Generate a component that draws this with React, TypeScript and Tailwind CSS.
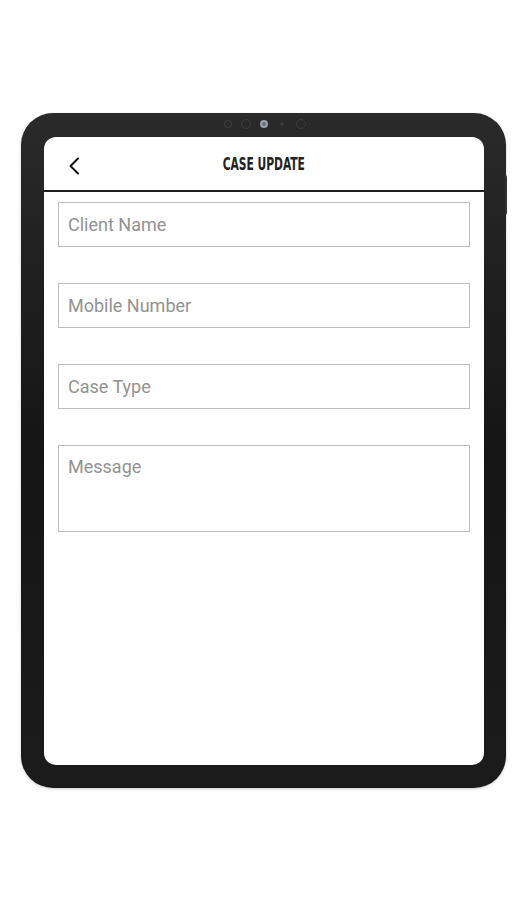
import React, { useState } from "react";

type Field = {
  name: string;
  placeholder: string;
};

const fields: Field[] = [
  { name: "client_name", placeholder: "Client Name" },
  { name: "mobile", placeholder: "Mobile Number" },
  { name: "case_type", placeholder: "Case Type" },
];

const App: React.FC = () => {
  const [form, setForm] = useState<Record<string, string>>({});

  const handleChange = (
    e: React.ChangeEvent<HTMLInputElement | HTMLTextAreaElement>
  ) => {
    const { name, value } = e.target;
    setForm((prev) => ({ ...prev, [name]: value }));
  };

  return (
    <div className="min-h-[900px] w-[527px] bg-white pt-[113px] pl-[21px]">
      {/* TABLET FRAME */}
      <div className="relative w-[485px] h-[675px] rounded-[32px] bg-gradient-to-b from-[#2a2a2a] via-[#151515] to-[#1b1b1b] pt-[24px] pl-[23px] pr-[22px] pb-[23px] shadow-[0_1px_3px_rgba(0,0,0,0.2)]">
        {/* side button */}
        <div className="absolute right-[-1px] top-[62px] w-[2px] h-[40px] rounded-r bg-[#333]" />

        {/* camera row */}
        <div className="absolute top-[5px] left-0 right-0 flex justify-center items-center gap-[9px] h-[12px] pl-[3px]">
          <span className="w-[8px] h-[8px] rounded-full border border-[#3d3d3d]" />
          <span className="w-[10px] h-[10px] rounded-full border border-[#3d3d3d]" />
          <span className="w-[8px] h-[8px] rounded-full bg-[#6b6f7c] border-2 border-[#9aa0ad]" />
          <span className="w-[4px] h-[4px] rounded-full bg-[#3a3a3a] mx-[3px]" />
          <span className="w-[10px] h-[10px] rounded-full border border-[#3d3d3d]" />
        </div>

        {/* SCREEN */}
        <div className="w-full h-full rounded-[12px] bg-white overflow-hidden flex flex-col">
          {/* HEADER */}
          <div className="relative h-[55px] flex items-center justify-center border-b-2 border-[#1f1f1f]">
            <svg
              className="absolute left-[24px] top-[20px]"
              width="12"
              height="18"
              viewBox="0 0 12 18"
              fill="none"
            >
              <path
                d="M10 1.5 L2.5 9 L10 16.5"
                stroke="#111"
                strokeWidth="2"
                strokeLinecap="round"
                strokeLinejoin="round"
              />
            </svg>
            <h4
              className="text-[17px] font-bold text-[#222] scale-x-[0.7] mt-[3px]"
              style={{ fontFamily: '"DejaVu Sans Condensed", "DejaVu Sans", sans-serif' }}
            >
              CASE UPDATE
            </h4>
          </div>

          {/* FORM */}
          <form
            onSubmit={(e) => e.preventDefault()}
            className="flex flex-col gap-[36px] px-[14px] pt-[10px]"
            style={{ fontFamily: "Roboto, sans-serif" }}
          >
            {fields.map((f) => (
              <input
                key={f.name}
                type="text"
                name={f.name}
                placeholder={f.placeholder}
                value={form[f.name] || ""}
                onChange={handleChange}
                className="w-full h-[45px] border-[1.5px] border-[#bdbdbd] px-[9px] text-[18px] text-[#333] placeholder:text-[#929292] focus:outline-none"
              />
            ))}

            {/* MESSAGE */}
            <textarea
              name="message"
              placeholder="Message"
              value={form.message || ""}
              onChange={handleChange}
              className="w-full h-[87px] border-[1.5px] border-[#bdbdbd] px-[9px] pt-[10px] text-[18px] leading-[22px] text-[#333] placeholder:text-[#929292] resize-none focus:outline-none"
            />
          </form>
        </div>
      </div>
    </div>
  );
};

export default App;
